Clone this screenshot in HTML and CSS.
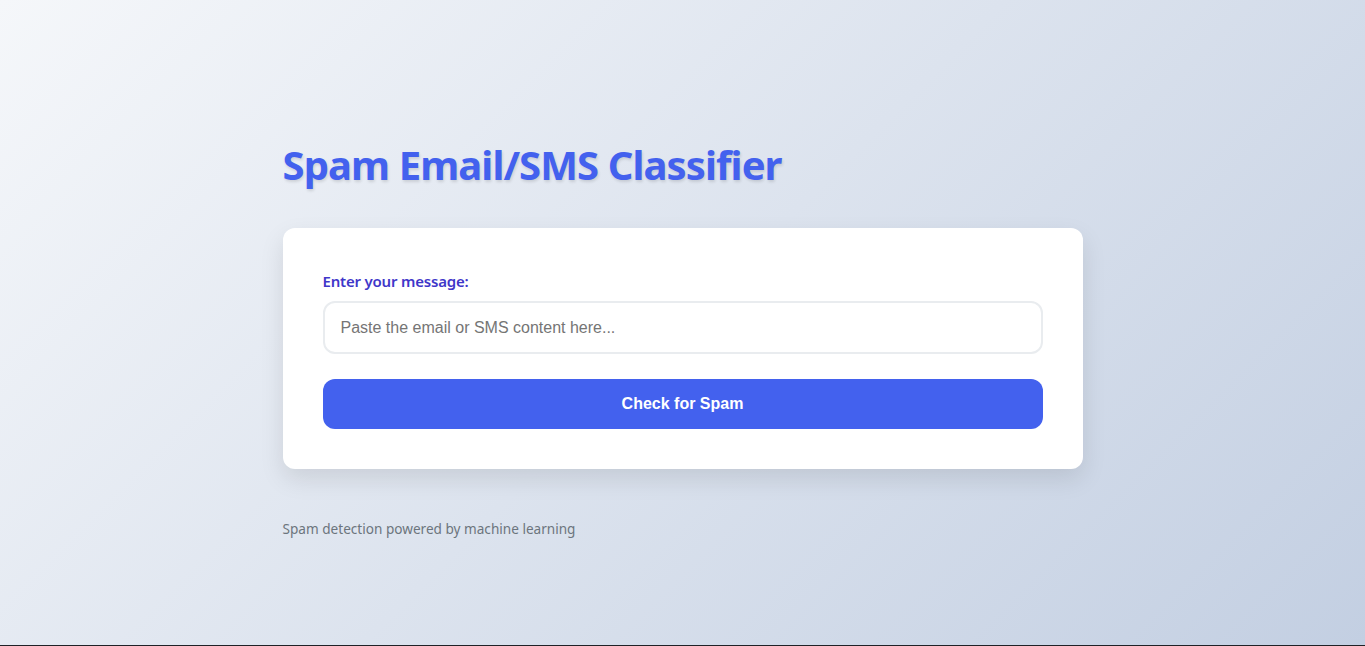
FILE: index.html
```html
<!DOCTYPE html>
<html lang="en">
<head>
<meta charset="utf-8">
<title>Spam Email/SMS Classifier</title>
<link rel="stylesheet" href="styles.css">
</head>
<body>
<main class="page">
  <h1 class="title">Spam Email/SMS Classifier</h1>
  <section class="card">
    <label class="label" for="msg">Enter your message:</label>
    <input class="input" id="msg" type="text" placeholder="Paste the email or SMS content here...">
    <button class="btn" type="button">Check for Spam</button>
  </section>
  <p class="footer">Spam detection powered by machine learning</p>
</main>
</body>
</html>
```
FILE: styles.css
```css
html {
  background: #1f2126;
  margin: 0;
  padding: 0;
}
body {
  margin: 0;
  height: 645px;
  background: linear-gradient(135deg, #f5f7fa 0%, #c3cfe2 100%);
  font-family: "Noto Sans", "Open Sans", sans-serif;
  overflow: hidden;
}
.page {
  width: 800px;
  margin: 0 auto;
  padding-top: 141px;
  display: flex;
  flex-direction: column;
}
.title {
  margin: 0 0 39px;
  font-size: 40px;
  line-height: 48px;
  font-weight: 700;
  color: #4361ee;
  text-shadow: 1px 2px 3px rgba(0, 0, 0, 0.12);
  letter-spacing: -0.9px;
}
.card {
  background: #ffffff;
  border-radius: 12px;
  padding: 43px 40px 40px;
  box-shadow: 0 10px 25px rgba(0, 0, 0, 0.1);
  display: flex;
  flex-direction: column;
}
.label {
  font-size: 15px;
  line-height: 20px;
  font-weight: 600;
  color: #3f37c9;
  letter-spacing: -0.2px;
  margin-bottom: 10px;
}
.input {
  box-sizing: border-box;
  height: 53px;
  width: 100%;
  border: 2px solid #e9ecef;
  border-radius: 12px;
  padding: 0 16px;
  font-family: "Liberation Sans", Arial, sans-serif;
  font-size: 16px;
  color: #333;
  outline: none;
  background: #fff;
}
.input::placeholder {
  color: #757575;
}
.btn {
  margin-top: 25px;
  height: 50px;
  border: none;
  border-radius: 12px;
  background: #4361ee;
  color: #ffffff;
  font-family: "Liberation Sans", Arial, sans-serif;
  font-size: 16px;
  font-weight: 700;
  cursor: pointer;
}
.footer {
  margin: 51px 0 0;
  font-size: 13.6px;
  line-height: 18px;
  color: #6c757d;
}
```
